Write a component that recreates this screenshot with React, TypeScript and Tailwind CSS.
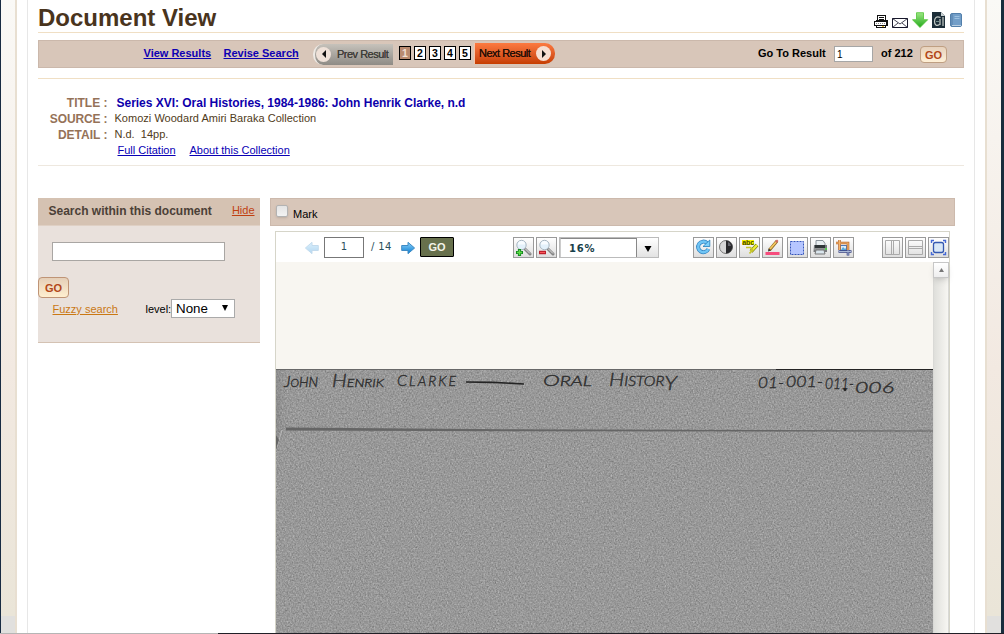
import React from "react";

function ToolButton({ children, className = "" }: { children: React.ReactNode; className?: string }) {
  return (
    <button className={`h-[21px] w-[21px] shrink-0 border border-[#9a9a9a] bg-linear-to-b from-white to-[#dedede] ${className}`}>
      <svg width="19" height="19" viewBox="0 0 19 19" fill="none">{children}</svg>
    </button>
  );
}

function Magnifier() {
  return (
    <>
      <path d="M10.5 10.5l5.5 5.5" stroke="#858585" strokeWidth="3" strokeLinecap="round" />
      <path d="M11 10.5l5 5" stroke="#e2e2e2" strokeWidth="1" />
      <circle cx="7.5" cy="7" r="4.7" fill="#e3f1fb" stroke="#a9b7c2" />
      <path d="M4 6.500a3.500 3.500 0 0 1 7 0z" fill="#f8fcff" />
    </>
  );
}

function Arrow({ back = false }: { back?: boolean }) {
  return (
    <svg width="15" height="14" viewBox="0 0 15 14" className={back ? "-scale-x-100 opacity-30" : ""}>
      <defs>
        <linearGradient id="blueArrow" x1="0" y1="0" x2="0" y2="1"><stop stopColor="#8dd3fb" /><stop offset="1" stopColor="#087bd0" /></linearGradient>
      </defs>
      <path d="M.7 4.500h6.300V1.300l6.600 5.700-6.600 5.700V9.500H.7z" fill="url(#blueArrow)" stroke="#3f8bc4" />
    </svg>
  );
}

function HeaderIcons() {
  return (
    <div className="flex h-[18px]">
      <svg width="16" height="18" viewBox="0 0 16 18" fill="none" stroke="#111" shapeRendering="crispEdges">
        <path d="M4.500 8.500v-5h8v5z" fill="#fff" /><path d="M6 5.500h5M6 7.500h5" />
        <path d="M1.500 9.500h12v4h-12z" fill="#fff" /><path d="M3 8.500h11.500v5" />
        <path d="M3.500 13.500v2h9v-2" fill="#fff" />
        <path d="M3 11.500h10" stroke="#888" strokeDasharray="1 1" /><path d="M9 14.500h2" stroke="#e8bd31" />
      </svg>
      <svg width="17" height="18" viewBox="0 0 17 18" fill="#fff" stroke="#17172b" className="ml-[3px]">
        <path d="M.5 6.500h15v9H.5z" /><path d="M.5 6.500L8 12l7.500-5.500M.5 15.500L6 11M15.500 15.500L10 11" fill="none" strokeWidth=".8" />
      </svg>
      <svg width="17" height="18" viewBox="0 0 17 18" className="ml-[3px]">
        <defs><linearGradient id="download" x1="0" y1="0" x2="0" y2="1"><stop stopColor="#9ce783" /><stop offset="1" stopColor="#22a91b" /></linearGradient></defs>
        <path d="M4.500.7h7v7h4.200L8 15.500.5 7.700h4z" fill="url(#download)" stroke="#4fc136" strokeWidth=".8" />
      </svg>
      <svg width="14" height="18" viewBox="0 0 14 18" className="ml-[3px]">
        <path d="M0 0h9l4 4v12H0z" fill="#1c2d38" /><path d="M9 0v4h4z" fill="#c7d0d1" />
        <path d="M8.500 5.500C4 3.500 2.500 6.500 2.500 9.500s2 5.200 5 3M8 7v6M11 5v9" fill="none" stroke="#c4cbc7" strokeWidth="1.200" /><path d="M4 9.500h3" stroke="#738d8a" />
      </svg>
      <svg width="13" height="18" viewBox="0 0 13 18" className="ml-[4px]">
        <rect x=".5" y="1.500" width="11" height="13" rx="1.500" fill="#729ec8" stroke="#527fab" />
        <path d="M2 2v12" stroke="#557fa9" /><path d="M4.500 4.500h5M4.500 6.500h5" stroke="#9dc1e1" /><path d="M2 13.500h9" stroke="#b9cee1" />
      </svg>
    </div>
  );
}

function PrevResult() {
  return (
    <div className="flex h-[21px] w-[80px] items-center rounded-l-[10px] border-l-2 border-[#eeeae5] bg-linear-to-b from-[#c6c2bb] to-[#8e8b85] text-[11px] text-[#403e39]">
      <span className="ml-px flex h-[15px] w-[15px] shrink-0 items-center justify-center rounded-full bg-[#efe1d8]">
        <svg width="4" height="8" viewBox="0 0 4 8"><path d="M4 0v8L0 4z" fill="#111" /></svg>
      </span>
      <span className="ml-[6px] mt-px whitespace-nowrap tracking-[-.5px] [text-shadow:0_0_.4px_#403e39]">Prev Result</span>
    </div>
  );
}

function NextResult() {
  return (
    <div className="ml-[3px] flex h-[21px] w-[81px] items-center rounded-r-[10px] border-l border-[#f7c5a9] bg-linear-to-b from-[#fc7a40] to-[#c63e00] text-[11px] text-[#240e05]">
      <span className="ml-[4px] w-[57px] whitespace-nowrap tracking-[-.5px] [text-shadow:0_0_.4px_#240e05]">Next Result</span>
      <span className="flex h-[15px] w-[15px] shrink-0 items-center justify-center rounded-full bg-[#f6ded1]">
        <svg width="4" height="8" viewBox="0 0 4 8"><path d="M0 0v8L4 4z" fill="#111" /></svg>
      </span>
    </div>
  );
}

function ResultBar() {
  return (
    <div className="mt-[7px] flex h-[28px] items-center border border-[#cbb8ab] bg-[#d8c6b9] text-[11px] font-bold">
      <a className="-mt-[2px] ml-[104.500px] w-[80px] text-[#0d00b3] underline">View Results</a>
      <a className="-mt-[2px] w-[89.500px] whitespace-nowrap text-[#0d00b3] underline">Revise Search</a>
      <div className="flex items-center font-normal"><PrevResult /></div>
      <div className="-mt-[2px] ml-[6px] flex gap-[3px]">
        {[1, 2, 3, 4, 5].map((n) => (
          <span key={n} className={`flex h-[14px] w-[12px] items-center justify-center border border-black text-[10.500px] leading-none ${n === 1 ? "bg-[#b98a70] text-[#f2dfd1]" : "bg-white text-black"}`}>{n}</span>
        ))}
      </div>
      <div className="-mt-px font-normal"><NextResult /></div>
      <div className="ml-auto mr-[16px] flex items-center">
        <span className="-mt-[2px] w-[76px] whitespace-nowrap">Go To Result</span>
        <input aria-label="Result number" defaultValue="1" className="h-[16px] w-[39px] border border-[#a6a6a6] bg-white px-[2px] text-[10px] font-normal outline-none" />
        <span className="-mt-[2px] ml-[8px] w-[39px] whitespace-nowrap">of 212</span>
        <button className="mt-[1px] h-[17px] w-[27px] rounded-[4px] border border-[#bf9f82] bg-linear-to-b from-[#e7d2bd] to-[#fff0d6] text-[11px] leading-[16px] text-[#b24719]">GO</button>
      </div>
    </div>
  );
}

function Citation() {
  return (
    <div className="mt-[10px] h-[88px] border-y border-[#f0dfc4] border-b-[#eee8df] pt-[15px] text-[11px] text-[#503b20]">
      <div className="grid grid-cols-[69.500px_1fr] grid-rows-[16px_16px_16px_16px] items-center gap-x-[7px]">
        <b className="mt-px text-right text-[12px] text-[#957258]">TITLE :</b><b className="ml-[2px] mt-px text-[12px] tracking-[-.02px] text-[#0d00ab]">Series XVI: Oral Histories, 1984-1986: John Henrik Clarke, n.d</b>
        <b className="mt-px text-right text-[12px] tracking-[-.12px] text-[#957258]">SOURCE :</b><span className="tracking-[.02px]">Komozi Woodard Amiri Baraka Collection</span>
        <b className="mt-px text-right text-[12px] text-[#957258]">DETAIL :</b><span className="whitespace-pre">N.d.  14pp.</span>
        <span /><span className="ml-[3px] flex text-[#0900b5]"><a className="w-[72px] underline">Full Citation</a><a className="underline">About this Collection</a></span>
      </div>
    </div>
  );
}

function SearchPanel() {
  return (
    <aside className="h-[145px] w-[222px] border-b border-[#d4c2b3] bg-[#e9e1dc] text-[11px]">
      <div className="flex h-[28px] items-center border-b border-[#dfd0c4] bg-[#d5c2b2] px-[5.500px] pb-[2px] pl-[10.500px]">
        <b className="text-[12px] text-[#4b4037]">Search within this document</b>
        <a className="ml-auto text-[#c04010] underline">Hide</a>
      </div>
      <input aria-label="Search this document" className="ml-[14px] mt-[16px] block h-[19px] w-[173px] border border-[#a9a6a3] bg-white outline-none" />
      <button className="mt-[16px] block h-[21px] w-[31px] rounded-[4px] border border-[#bf9476] bg-linear-to-b from-[#e5cfb8] to-[#ffefd0] pt-px font-bold text-[#b24719]">GO</button>
      <div className="mt-px flex h-[19px] items-center">
        <a className="ml-[14.500px] mt-[2px] w-[93px] whitespace-nowrap text-[#ca7814] underline">Fuzzy search</a><span className="mt-[2px] w-[25.500px]">level:</span>
        <button className="flex h-[19px] w-[64px] items-center justify-between border border-[#aaa] bg-white pl-[4px] pr-[6px] text-[13.330px] leading-none"><span>None</span><svg width="6" height="6" viewBox="0 0 6 6" className="mt-[-1px]"><path d="M0 0h6L3 6z" /></svg></button>
      </div>
    </aside>
  );
}

function ViewerToolbar() {
  return (
    <div className="flex h-[30px] bg-white pt-[5px] font-['DejaVu_Sans',sans-serif]">
      <div className="ml-[28px] mt-[4px] h-[14px]"><Arrow back /></div>
      <input aria-label="Page" defaultValue="1" className="ml-[5px] h-[21px] w-[40px] border border-[#777] bg-white pb-[2px] text-center text-[10px] text-[#294f5b] outline-none" />
      <span className="ml-[7px] mt-[2px] w-[30px] whitespace-nowrap text-[10px] leading-[15px] tracking-[.35px] text-[#294f5b]">/ 14</span>
      <div className="mt-[4px] h-[14px]"><Arrow /></div>
      <button className="ml-[4px] h-[20px] w-[34px] rounded-[1px] border border-black bg-[#67704c] font-['Liberation_Sans',sans-serif] text-[11px] font-bold text-[#f3f3e9]">GO</button>
      <div className="ml-[59px] flex gap-[2px]">
        <ToolButton><Magnifier /><path d="M2 14.500h7M5.500 11v7" stroke="#168b22" strokeWidth="3.200" /><path d="M3 14.500h5M5.500 12v5" stroke="#5ddb45" strokeWidth="1.300" /></ToolButton>
        <ToolButton><Magnifier /><path d="M2 14.500h7" stroke="#bd202b" strokeWidth="3.500" /><path d="M3 14.500h5" stroke="#fb575a" /></ToolButton>
      </div>
      <div className="ml-[2px] flex h-[21px] w-[100px] border border-[#bbb] bg-white">
        <span className="w-[77px] border-l border-t border-r border-[#888] border-l-[#ccc] pl-[8px] text-[10px] font-bold leading-[20px] tracking-[.8px] text-[#173f4a]">16%</span>
        <span className="flex flex-1 items-center justify-center rounded-tr-[3px] bg-linear-to-b from-white to-[#e3e3e3]"><svg width="8" height="6" viewBox="0 0 8 6" className="mt-[3px]"><path d="M.5 0h7L4 6z" fill="#000" /></svg></span>
      </div>
      <div className="ml-[34px] flex gap-[2px]">
        <ToolButton><path d="M13 5A5.300 5.300 0 1 0 14.300 11" stroke="#3486c3" strokeWidth="4" /><path d="M13 5A5.300 5.300 0 1 0 14.300 11" stroke="#70c5f5" strokeWidth="2.500" /><path d="M15.800 2v6.500H9z" fill="#7dd0fb" stroke="#257cba" strokeWidth=".8" /></ToolButton>
        <ToolButton><circle cx="9" cy="9" r="6.500" fill="#d8d8d8" stroke="#777" /><path d="M9 2.500a6.500 6.500 0 0 1 0 13z" fill="#29292c" /><path d="M11 4a5 5 0 0 1 3 4h-3z" fill="#66666d" /></ToolButton>
        <ToolButton><path d="M2 2h12v5H2z" fill="#f7f500" /><text x="2.200" y="6.700" fontFamily="Liberation Sans" fontSize="7" fontWeight="bold" fill="#484800">abc</text><path d="M17 7L11 13.500" stroke="#77780a" strokeWidth="3.700" /><path d="M17 7L11 13.500" stroke="#eeef36" strokeWidth="2.500" /><path d="M6 9.500h4.500l2 2.500-3 3.500" stroke="#c6c52b" strokeWidth="1.700" /></ToolButton>
        <ToolButton><path d="M14 3L6.500 12" stroke="#8d6820" strokeWidth="3" /><path d="M13.500 3.500L7 11" stroke="#f5c962" strokeWidth="1.800" /><path d="M12 3.500l2-2 1.500 1.500-2 2z" fill="#cf6960" /><path d="M5.500 10.500l2.500 2-3 1z" fill="#383329" /><path d="M2.500 15.500h14" stroke="#f64c7d" strokeWidth="3" /></ToolButton>
        <ToolButton className="ml-[2px]"><rect x="2.500" y="3.500" width="13" height="13" fill="#b6c6ff" stroke="#3455bb" strokeDasharray="2 1" /></ToolButton>
        <ToolButton><path d="M5 2.500h7l2 3V8H5z" fill="#e9eef1" stroke="#8a9299" /><path d="M3 7h13v7H2.500z" fill="#777a7d" /><path d="M4 7h10v3H4z" fill="#303537" /><path d="M3 11h12" stroke="#aaa" /><circle cx="15" cy="11" r="1" fill="#42e33c" /><path d="M5 12h8l1 4H4z" fill="#d9e5ed" stroke="#777" /></ToolButton>
        <ToolButton><rect x="6.500" y="7.500" width="6" height="5" fill="#dcecf8" stroke="#4d78b6" /><path d="M7 12l2-3 2 2 1-1v2" fill="#56a8dc" /><path d="M2 5h12v8M5.500 2v10" stroke="#b66832" strokeWidth="2.600" /><path d="M2 5h12v8M5.500 2v10" stroke="#f6b56c" strokeWidth="1.200" /><path d="M4.500 13.500h13M14 12v5.500" stroke="#394384" strokeWidth="2.600" /><path d="M5 13.500h12M14 12v5" stroke="#aab9d6" strokeWidth="1" /></ToolButton>
      </div>
      <div className="ml-[28px] flex gap-[2px]">
        <ToolButton><path d="M2.500 2.500h14v14h-14zM8.500 3v13M10.500 3v13" stroke="#aaa" /></ToolButton>
        <ToolButton><path d="M2.500 2.500h14v14h-14zM3 8.500h13M3 10.500h13" stroke="#aaa" /></ToolButton>
        <ToolButton><rect x="4.500" y="4.500" width="10" height="10" rx="2" fill="#d8e7f7" stroke="#3458b1" strokeWidth="1.300" /><path d="M2.500 5V2.500H5M14 2.500h2.500V5M2.500 14v2.500H5M14 16.500h2.500V14" stroke="#4569d5" strokeWidth="1.400" /></ToolButton>
      </div>
    </div>
  );
}

function ScannedPage() {
  return (
    <svg width="657" height="264" viewBox="0 0 657 264" className="block">
      <defs>
        <filter id="paperGrain" x="0" y="0" width="100%" height="100%" colorInterpolationFilters="sRGB">
          <feTurbulence type="fractalNoise" baseFrequency=".63" numOctaves="4" seed="8" />
          <feColorMatrix values=".33 .33 .33 0 0 .33 .33 .33 0 0 .33 .33 .33 0 0 0 0 0 0 1" />
          <feComponentTransfer><feFuncR type="linear" slope=".6" intercept=".305" /><feFuncG type="linear" slope=".6" intercept=".305" /><feFuncB type="linear" slope=".6" intercept=".305" /></feComponentTransfer>
        </filter>
        <linearGradient id="paperEdge"><stop stopColor="#555" stopOpacity=".18" /><stop offset="1" stopColor="#555" stopOpacity="0" /></linearGradient>
      </defs>
      <rect width="657" height="264" fill="#989898" />
      <rect width="657" height="264" filter="url(#paperGrain)" opacity=".8" />
      <path d="M0 0h10v59L2 80H0z" fill="url(#paperEdge)" />
      <path d="M0 .5h500" stroke="#686868" /><path d="M500 .5h157" stroke="#242424" />
      <path d="M10 58.500l220 1.700 427 1.300v1L230 62.200 10 61.500z" fill="#656565" />
      <path d="M6 61L1 78" stroke="#b9b9b9" /><path d="M0 66v14l3-9z" fill="#666" />
      <path d="M190 13l27 .3 31 1.700" stroke="#242424" strokeWidth="1.700" fill="none" />
      <g fill="#303030" fontFamily="Lato, sans-serif" fontStyle="italic" fontWeight="300" fontSize="13" stroke="#303030" strokeWidth=".4">
        <text x="8" y="18" textLength="34" lengthAdjust="spacingAndGlyphs"><tspan fontSize="16">J</tspan><tspan fontSize="11">O</tspan>HN</text>
        <text x="56" y="18" textLength="52" lengthAdjust="spacingAndGlyphs"><tspan fontSize="18">H</tspan><tspan fontSize="12">ENRIK</tspan></text>
        <text x="121" y="17" textLength="59" lengthAdjust="spacing"><tspan fontSize="16">C</tspan><tspan fontSize="14">LARKE</tspan></text>
        <text x="267" y="17" textLength="49" lengthAdjust="spacingAndGlyphs"><tspan fontSize="15">O</tspan>RAL</text>
        <text x="333" y="17" textLength="68" lengthAdjust="spacingAndGlyphs"><tspan fontSize="18">H</tspan>ISTOR<tspan fontSize="19" dy="4">Y</tspan></text>
        <g fontSize="15">
          <text x="482" y="19" textLength="26" lengthAdjust="spacingAndGlyphs">01-</text>
          <text x="510" y="18" textLength="37" lengthAdjust="spacingAndGlyphs">001-</text>
          <text x="549" y="20" textLength="29" lengthAdjust="spacingAndGlyphs">011-</text>
          <text x="579" y="24" textLength="39" lengthAdjust="spacingAndGlyphs">006</text>
        </g>
      </g>
      <circle cx="569" cy="20.500" r="1.500" fill="#222" />
    </svg>
  );
}

function Viewer() {
  return (
    <main className="ml-[10px] w-[685px]">
      <div className="flex h-[28px] items-center border border-[#ccb9ac] bg-[#d8c6b9] text-[11px]">
        <span className="mb-[2px] ml-[5px] h-[12px] w-[12px] rounded-[2px] border border-[#b3b3b3] bg-linear-to-b from-[#e4e4e4] to-[#f3f3f3] shadow-sm" />
        <span className="ml-[5px] mt-[4px]">Mark</span>
      </div>
      <div className="ml-[5px] mt-[5px] h-[403px] w-[675px] border-x border-t border-[#d6d5c9] bg-[#f8f6f1]">
        <ViewerToolbar />
        <div className="flex">
          <div className="h-[372px] w-[657px] shrink-0 pt-[107px]"><ScannedPage /></div>
          <div className="h-[372px] w-[16px] shrink-0 border-x border-[#d9d9d6] bg-linear-to-r from-[#dfdfdb] to-[#f7f6f2]">
            <div className="-ml-px flex h-[16px] w-[16px] items-center justify-center border border-[#c7c7c7] bg-linear-to-b from-white to-[#eee] shadow-md"><svg width="5" height="4" viewBox="0 0 5 4"><path d="M0 4h5L2.500 0z" fill="#777" /></svg></div>
          </div>
        </div>
      </div>
    </main>
  );
}

function SideBand({ className }: { className: string }) {
  return <div className={`flex h-full flex-col border-[#e8dfd1] ${className}`}><div className="flex-1 bg-linear-to-b from-[#faf9f6] via-[#f2e9e1] via-60% to-[#eae5d8]" /><div className="h-[17px] bg-[#e1e0de]" /></div>;
}

export default function App() {
  return (
    <div className="h-[634px] w-[1004px] overflow-hidden bg-white font-['Liberation_Sans',Arial,sans-serif] text-black">
      <div className="flex h-[633px]">
        <div className="w-px bg-[#182b42]" />
        <SideBand className="w-[16px] border-r-2" />
        <div className="ml-[10px] w-[948px] border-x border-[#e7e7e7] px-[10px]">
          <header className="flex h-[33px] w-[926px] justify-between border-b border-[#f0dfc4]">
            <h1 className="mt-[4px] text-[24px] font-bold leading-[28px] text-[#49341d]">Document View</h1>
            <div className="mr-[1px] mt-[12px]"><HeaderIcons /></div>
          </header>
          <div className="w-[926px]"><ResultBar /><Citation /></div>
          <div className="mt-[32px] flex"><SearchPanel /><Viewer /></div>
        </div>
        <SideBand className="ml-[10px] w-[16px] border-l-2" />
        <div className="flex-1 bg-[#182d3d]" />
      </div>
      <div className="flex h-px"><div className="w-[218px] bg-[#b5b5b5]" /><div className="flex-1 bg-[#202027]" /></div>
    </div>
  );
}
